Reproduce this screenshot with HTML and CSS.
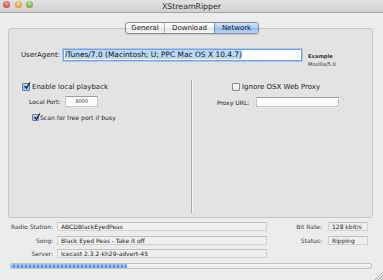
FILE: index.html
```html
<!DOCTYPE html>
<html>
<head>
    <title>XStreamRipper</title>
    <link rel="stylesheet" href="styles.css">
</head>
<body>
    <div class="window">
        <div class="titlebar">
            <div class="lights">
                <span class="light red"></span>
                <span class="light yellow"></span>
                <span class="light green"></span>
            </div>
            <div class="title">XStreamRipper</div>
            <div></div>
        </div>

        <div class="tabview">
            <div class="tabs">
                <div class="tab tab-general">General</div>
                <div class="tab tab-download">Download</div>
                <div class="tab tab-network selected">Network</div>
            </div>

            <div class="panel">
                <div class="ua-row">
                    <span class="ua-label">UserAgent:</span>
                    <div class="ua-input"><span class="selection">iTunes/7.0 (Macintosh; U; PPC Mac OS X 10.4.7)</span></div>
                    <div class="example">
                        <b>Example</b>
                        <span>Mozilla/5.0</span>
                    </div>
                </div>

                <div class="columns">
                    <div class="col col-left">
                        <div class="check-row big">
                            <span class="box checked">
                                <svg viewBox="0 0 10 10"><path d="M2 5 L4.2 7.6 L8.6 0.6" fill="none" stroke="#1d2a3a" stroke-width="1.6"/></svg>
                            </span>
                            <span>Enable local playback</span>
                        </div>
                        <div class="field-row port-row">
                            <span class="small-label">Local Port:</span>
                            <div class="text-input port-input">8000</div>
                        </div>
                        <div class="check-row small scan-row">
                            <span class="box checked">
                                <svg viewBox="0 0 10 10"><path d="M2 5 L4.2 7.6 L8.6 0.6" fill="none" stroke="#1d2a3a" stroke-width="1.6"/></svg>
                            </span>
                            <span>Scan for free port if busy</span>
                        </div>
                    </div>

                    <div class="col col-right">
                        <div class="check-row big proxy-check">
                            <span class="box"></span>
                            <span>Ignore OSX Web Proxy</span>
                        </div>
                        <div class="field-row proxy-row">
                            <span class="small-label">Proxy URL:</span>
                            <div class="text-input proxy-input"></div>
                        </div>
                    </div>
                </div>
            </div>
        </div>

        <div class="info">
            <span class="info-label">Radio Station:</span>
            <div class="info-field">ABCDBlackEyedPeas</div>
            <span class="info-label right">Bit Rate:</span>
            <div class="info-field">128 kbit/s</div>

            <span class="info-label">Song:</span>
            <div class="info-field">Black Eyed Peas - Take it off</div>
            <span class="info-label right">Status:</span>
            <div class="info-field">Ripping</div>

            <span class="info-label">Server:</span>
            <div class="info-field">Icecast 2.3.2-kh29-advert-45</div>
        </div>

        <div class="progress">
            <div class="progress-bar" style="width: 32.3%"></div>
        </div>

        <svg class="grip" viewBox="0 0 9 9">
            <path d="M1 9 L9 1 M4 9 L9 4 M7 9 L9 7" stroke="#9a9a9a" stroke-width="0.8"/>
        </svg>
    </div>
</body>
</html>
```

FILE: styles.css
```css
body {
    margin: 0;
    font-family: "DejaVu Sans", "Liberation Sans", sans-serif;
    color: #1e1e1e;
    background: #ececec;
}
.window {
    position: relative;
    width: 383px;
    height: 280px;
    overflow: hidden;
    background: #ececec;
}

/* title bar */
.titlebar {
    display: grid;
    grid-template-columns: 1fr auto 1fr;
    height: 12px;
    border-bottom: 1px solid #a4a4a4;
    background: linear-gradient(#e2e2e2, #d0d0d0);
}
.lights {
    display: flex;
    gap: 4.5px;
    padding-left: 3px;
    margin-top: 1px;
}
.light {
    width: 7px;
    height: 7px;
    border-radius: 50%;
}
.light.red {
    background: radial-gradient(circle at 50% 35%, #f7a9a2, #d9574d 60%, #b8423a);
}
.light.yellow {
    background: radial-gradient(circle at 50% 35%, #fbd9a0, #e5a23a 60%, #c4832a);
}
.light.green {
    background: radial-gradient(circle at 50% 35%, #c4e7a7, #76b450 60%, #57933b);
}
.title {
    font-size: 7.8px;
    line-height: 13px;
    color: #2a2a2a;
}

/* tabs */
.tabview {
    display: flex;
    flex-direction: column;
    margin-top: 9px;
}
.tabs {
    position: relative;
    z-index: 1;
    display: flex;
    align-self: center;
    margin-left: 1px;
    margin-bottom: -6px;
    height: 12px;
    border: 1px solid #8c8c8c;
    border-radius: 3px;
    box-sizing: border-box;
    overflow: hidden;
    background: linear-gradient(#ffffff, #f1f1f1 50%, #e4e4e4 51%, #f4f4f4);
    box-shadow: 0 1px 1px rgba(0, 0, 0, 0.12);
}
.tab {
    font-size: 7px;
    line-height: 10px;
    text-align: center;
    color: #222;
}
.tab-general {
    width: 38px;
    border-right: 1px solid #b4b4b4;
}
.tab-download {
    width: 49px;
}
.tab-network {
    width: 43px;
}
.tab.selected {
    background: linear-gradient(#cfe3f9, #a9cdf3 50%, #8dbdef 51%, #b5d7f8);
    border-left: 1px solid #6c8fb8;
    color: #0d1a2a;
}
.panel {
    display: flex;
    flex-direction: column;
    height: 190px;
    margin: 0 10px 0 8px;
    box-sizing: border-box;
    border: 1px solid #c6c6c6;
    border-radius: 3px;
    background: #e3e3e3;
}

/* user agent */
.ua-row {
    display: flex;
    align-items: flex-start;
    height: 12px;
    margin-top: 20px;
    padding-left: 12px;
}
.ua-label {
    width: 42px;
    font-size: 7px;
    line-height: 12px;
    color: #222;
}
.ua-input {
    width: 239px;
    height: 12px;
    box-sizing: border-box;
    padding-left: 1px;
    border: 1px solid #7aa4d9;
    background: #fff;
    box-shadow: 0 0 0 1px #a8c7ee;
    font-size: 7.45px;
    line-height: 10px;
    white-space: nowrap;
    overflow: hidden;
}
.selection {
    background: #bcd8f7;
    color: #111;
}
.example {
    display: flex;
    flex-direction: column;
    margin: 3px 0 0 6px;
    font-size: 5.2px;
    line-height: 8px;
    color: #333;
}

/* columns */
.columns {
    display: flex;
    flex: 1;
    margin: 19px 0 4px;
}
.col {
    display: flex;
    flex-direction: column;
}
.col-left {
    width: 183px;
    padding: 2px 0 0 13px;
    box-sizing: border-box;
    border-right: 1px solid #a9a9a9;
    box-shadow: 1px 0 0 #f5f5f5;
}
.col-right {
    flex: 1;
    padding-top: 2px;
}
.check-row {
    display: flex;
    align-items: center;
    color: #1e1e1e;
}
.check-row.big {
    height: 9px;
    gap: 2px;
    font-size: 7px;
}
.check-row.small {
    height: 7px;
    gap: 1px;
    font-size: 6.1px;
}
.box {
    position: relative;
    width: 8px;
    height: 8px;
    box-sizing: border-box;
    border: 1px solid #8a8a8a;
    border-radius: 1px;
    background: linear-gradient(#ffffff, #ededed);
}
.box.checked {
    border-color: #5d7ea8;
    background: linear-gradient(#d2e4f8, #8ab6e6 55%, #a9cbf1);
}
.check-row.small .box {
    width: 7px;
    height: 7px;
}
.box svg {
    position: absolute;
    left: 0;
    top: -2px;
    width: 8px;
    height: 8px;
}
.field-row {
    display: flex;
    align-items: center;
}
.small-label {
    font-size: 6px;
    color: #222;
}
.text-input {
    box-sizing: border-box;
    border: 1px solid #c4c4c4;
    border-top-color: #9c9c9c;
    background: #fff;
}
.port-row {
    margin-top: 5px;
    padding-left: 7px;
    height: 11px;
}
.port-input {
    width: 33px;
    height: 11px;
    margin-left: 5px;
    font-size: 5px;
    line-height: 9px;
    text-align: center;
    color: #333;
}
.scan-row {
    margin-top: 7px;
    padding-left: 10px;
}
.proxy-check {
    padding-left: 40px;
    gap: 1px;
}
.proxy-row {
    margin-top: 6px;
    padding-left: 25px;
    height: 10px;
}
.proxy-input {
    width: 83px;
    height: 10px;
    margin-left: 7px;
}

/* status info */
.info {
    display: grid;
    grid-template-columns: 57px 210px 61px 40px;
    grid-template-rows: 9px 9px 9px;
    row-gap: 4.5px;
    margin-top: 4px;
}
.info-label {
    padding-right: 4px;
    text-align: right;
    font-size: 6px;
    line-height: 9px;
    color: #3a3a3a;
}
.info-label.right {
    padding-right: 6px;
}
.info-field {
    box-sizing: border-box;
    padding-left: 3px;
    border: 1px solid #d2d2d2;
    border-top-color: #c0c0c0;
    background: #efefef;
    font-size: 6px;
    line-height: 8px;
    color: #222;
    white-space: nowrap;
}

/* progress */
.progress {
    height: 6px;
    margin: 5px 11px 0 10px;
    box-sizing: border-box;
    border: 1px solid #c2c2c2;
    border-radius: 2px;
    background: linear-gradient(#f4f4f4, #e6e6e6);
    overflow: hidden;
}
.progress-bar {
    height: 100%;
    background:
        repeating-linear-gradient(90deg, rgba(255, 255, 255, 0.35) 0 2px, rgba(255, 255, 255, 0) 2px 4px),
        linear-gradient(#8dbcf2, #4f8fe0 55%, #6aa3ea);
}
.grip {
    position: absolute;
    right: 0;
    bottom: 0;
    width: 9px;
    height: 9px;
}
```
